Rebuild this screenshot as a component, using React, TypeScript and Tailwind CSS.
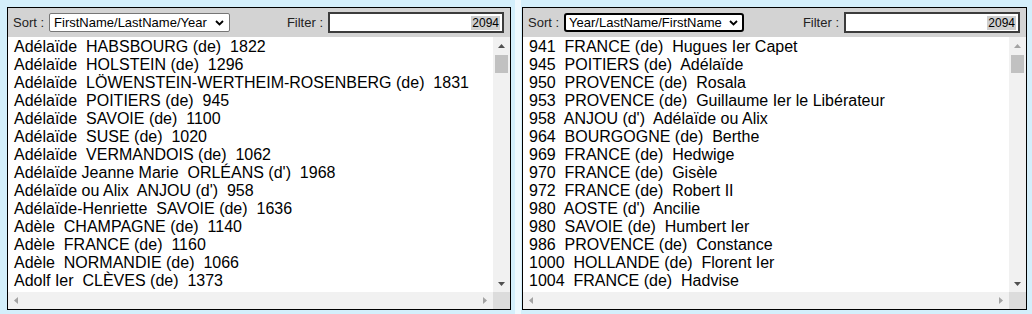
import React from 'react';

const leftRows = [
    'Adélaïde  HABSBOURG (de)  1822',
    'Adélaïde  HOLSTEIN (de)  1296',
    'Adélaïde  LÖWENSTEIN-WERTHEIM-ROSENBERG (de)  1831',
    'Adélaïde  POITIERS (de)  945',
    'Adélaïde  SAVOIE (de)  1100',
    'Adélaïde  SUSE (de)  1020',
    'Adélaïde  VERMANDOIS (de)  1062',
    'Adélaïde Jeanne Marie  ORLÉANS (d\')  1968',
    'Adélaïde ou Alix  ANJOU (d\')  958',
    'Adélaïde-Henriette  SAVOIE (de)  1636',
    'Adèle  CHAMPAGNE (de)  1140',
    'Adèle  FRANCE (de)  1160',
    'Adèle  NORMANDIE (de)  1066',
    'Adolf Ier  CLÈVES (de)  1373',
];

const rightRows = [
    '941  FRANCE (de)  Hugues Ier Capet',
    '945  POITIERS (de)  Adélaïde',
    '950  PROVENCE (de)  Rosala',
    '953  PROVENCE (de)  Guillaume Ier le Libérateur',
    '958  ANJOU (d\')  Adélaïde ou Alix',
    '964  BOURGOGNE (de)  Berthe',
    '969  FRANCE (de)  Hedwige',
    '970  FRANCE (de)  Gisèle',
    '972  FRANCE (de)  Robert II',
    '980  AOSTE (d\')  Ancilie',
    '980  SAVOIE (de)  Humbert Ier',
    '986  PROVENCE (de)  Constance',
    '1000  HOLLANDE (de)  Florent Ier',
    '1004  FRANCE (de)  Hadvise',
];

// tiny scrollbar arrows
const Arrow = ({ dir, color }: { dir: 'up' | 'down' | 'left' | 'right'; color: string }) => {
    const pts = {
        up: '0,4 3.5,0 7,4',
        down: '0,0 7,0 3.5,4',
        left: '4,0 4,7 0,3.5',
        right: '0,0 0,7 4,3.5',
    }[dir];
    const w = dir === 'up' || dir === 'down' ? 7 : 4;
    const h = dir === 'up' || dir === 'down' ? 4 : 7;
    return (
        <svg width={w} height={h} viewBox={`0 0 ${w} ${h}`}>
            <polygon points={pts} fill={color} />
        </svg>
    );
};

interface PanelProps {
    sortLabel: string;
    focused?: boolean;
    rows: string[];
    width: string;
    upColor: string;
}

const Panel: React.FC<PanelProps> = ({ sortLabel, focused, rows, width, upColor }) => {
    const selectClass = focused
        ? 'h-[19px] w-[180px] border-2 border-black rounded-[3px] bg-white flex items-center justify-between pl-[3px] pr-[4px]'
        : 'h-[19px] w-[181px] border border-[#767676] rounded-[2px] bg-white flex items-center justify-between pl-[4px] pr-[5px]';

    return (
        <div className={`${width} h-[303px] mt-[7px] border border-black bg-white flex flex-col`}>
            {/* Header */}
            <div className="h-[29px] bg-[#d3d3d3] flex items-center pl-[5px] pr-[6px] text-[13px] text-[#222]">
                <span className="mr-[5px]">Sort :</span>
                <div className={selectClass}>
                    <span className="text-[13px] text-black leading-none">{sortLabel}</span>
                    <svg width="9" height="6" viewBox="0 0 9 6">
                        <polyline points="1,1 4.5,4.5 8,1" fill="none" stroke="#000" strokeWidth="1.8" />
                    </svg>
                </div>
                <span className="ml-auto mr-[5px]">Filter :</span>
                <div className="w-[176px] h-[21px] border-2 border-[#3c3c3c] bg-white flex items-center justify-end pr-[2px]">
                    <span className="text-[12px] leading-[14px] bg-[#cfcfcf] text-black px-[1px]">2094</span>
                </div>
            </div>

            {/* List + vertical scrollbar */}
            <div className="flex-1 flex min-h-0">
                <div className="flex-1 overflow-hidden pl-[6px] pt-[1px] text-[16px] leading-[18px] text-black whitespace-pre">
                    {rows.map((r, i) => (
                        <div key={i}>{r}</div>
                    ))}
                </div>
                <div className="w-[17px] bg-[#f1f1f1] flex flex-col">
                    <div className="h-[17px] flex items-center justify-center">
                        <Arrow dir="up" color={upColor} />
                    </div>
                    <div className="h-[18px] mx-[2px] mt-[1px] bg-[#c1c1c1]" />
                    <div className="flex-1" />
                    <div className="h-[17px] flex items-center justify-center">
                        <Arrow dir="down" color="#505050" />
                    </div>
                </div>
            </div>

            {/* Horizontal scrollbar */}
            <div className="h-[17px] flex bg-[#f1f1f1]">
                <div className="flex-1 flex items-center justify-between px-[6px]">
                    <Arrow dir="left" color="#a3a3a3" />
                    <Arrow dir="right" color="#a3a3a3" />
                </div>
                <div className="w-[17px] bg-[#dcdcdc]" />
            </div>
        </div>
    );
};

export default function App() {
    return (
        <div className="w-[1032px] h-[314px] bg-[#d4effb] flex pl-[7px] font-['Liberation_Sans',Arial,sans-serif]">
            <Panel width="w-[504px]" sortLabel="FirstName/LastName/Year" rows={leftRows} upColor="#505050" />
            <div className="ml-[4px] w-[6px] h-full bg-[#eef9fe]" />
            <div className="w-[1px]" />
            <Panel width="w-[505px]" sortLabel="Year/LastName/FirstName" rows={rightRows} upColor="#a3a3a3" focused />
        </div>
    );
}
